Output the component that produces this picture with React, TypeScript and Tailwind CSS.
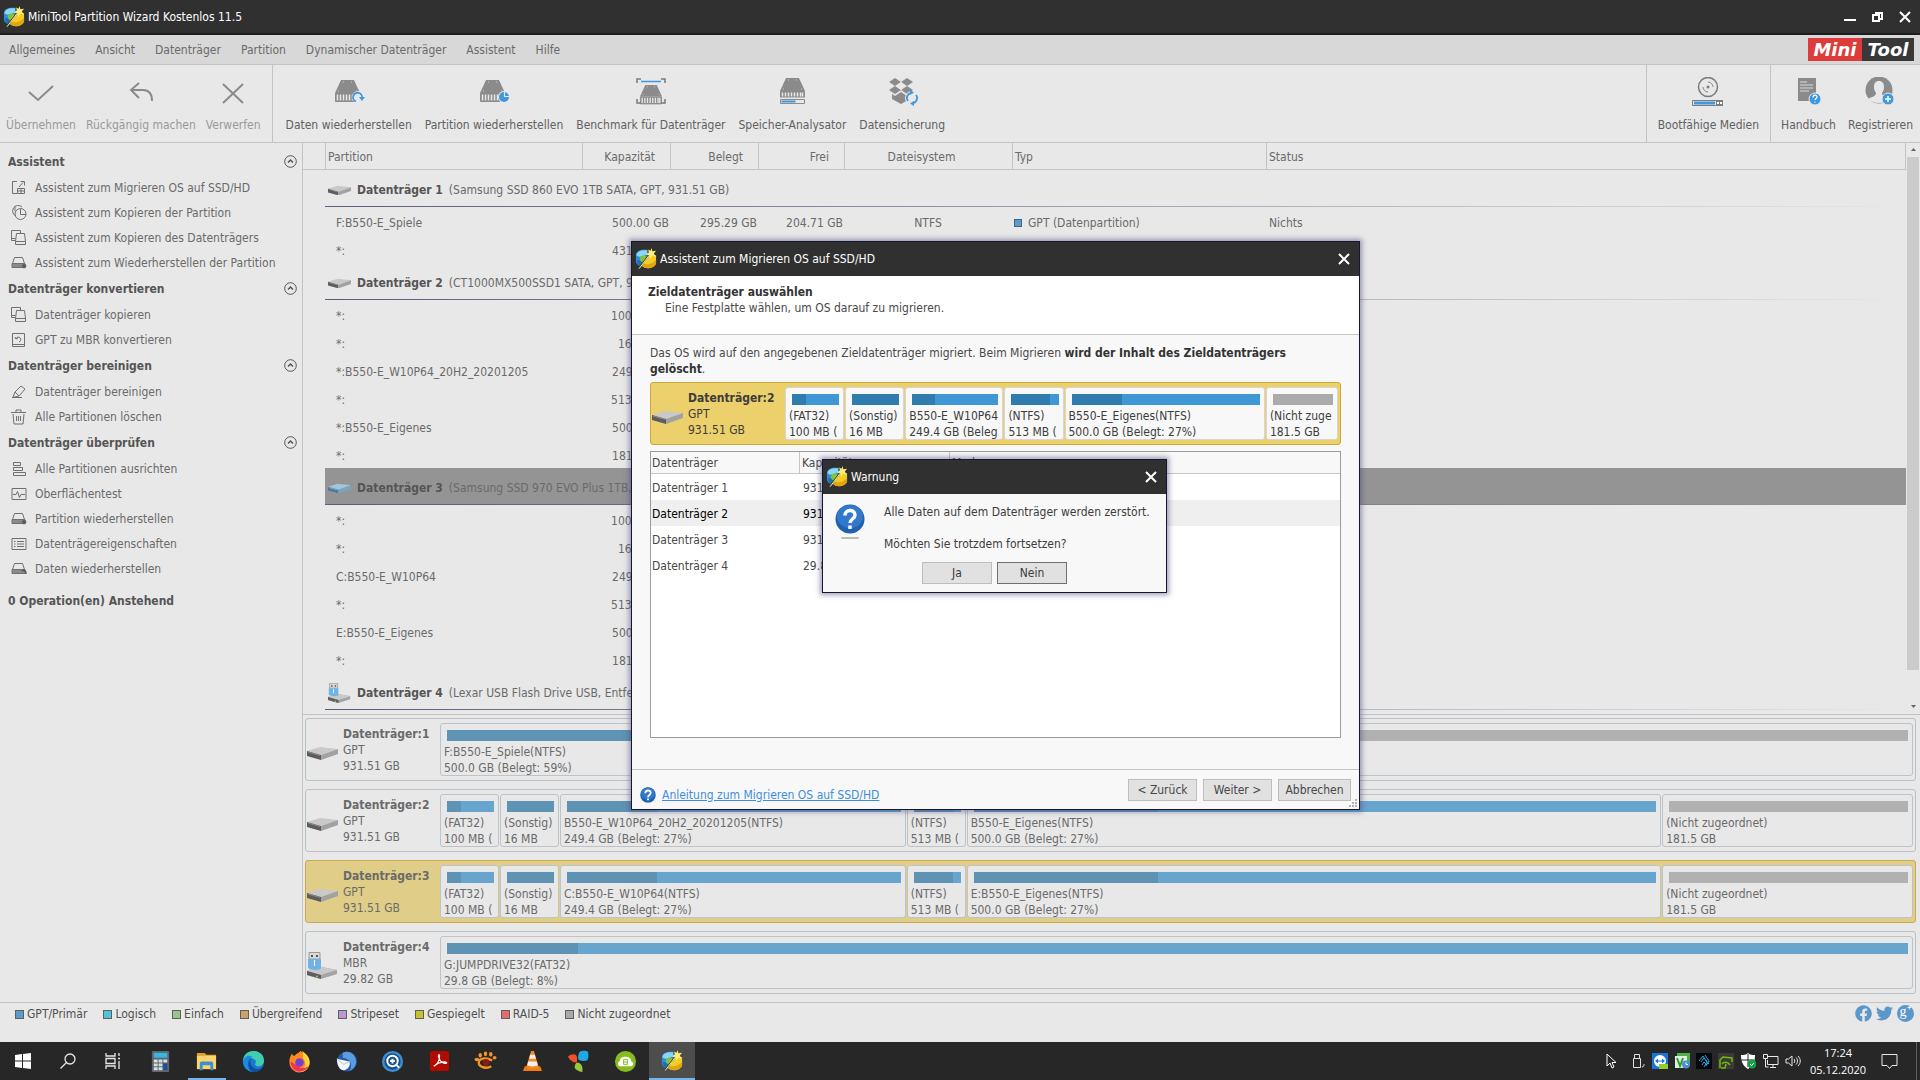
import React from "react";
import { clsx } from "clsx";
import { FaFacebook, FaTwitter } from "react-icons/fa";

type Part = { name: string; size: string; used: number; grow: number; free?: boolean };
type Disk = { title: string; style: string; size: string; usb?: boolean; selected?: boolean; parts: Part[] };
type Row = { name: string; cap: string; used?: string; free?: string; fs?: string; type?: string; status?: string };
type Group = { title: string; info: string; icon: "disk" | "blue" | "usb"; selected?: boolean; rows: Row[] };

const menu = ["Allgemeines", "Ansicht", "Datenträger", "Partition", "Dynamischer Datenträger", "Assistent", "Hilfe"];

const sidebar = [
  {
    title: "Assistent",
    items: [
      ["migrate", "Assistent zum Migrieren OS auf SSD/HD"],
      ["copyPart", "Assistent zum Kopieren der Partition"],
      ["copyDisk", "Assistent zum Kopieren des Datenträgers"],
      ["recover", "Assistent zum Wiederherstellen der Partition"],
    ],
  },
  {
    title: "Datenträger konvertieren",
    items: [
      ["copyDisk", "Datenträger kopieren"],
      ["convert", "GPT zu MBR konvertieren"],
    ],
  },
  {
    title: "Datenträger bereinigen",
    items: [
      ["wipe", "Datenträger bereinigen"],
      ["trash", "Alle Partitionen löschen"],
    ],
  },
  {
    title: "Datenträger überprüfen",
    items: [
      ["align", "Alle Partitionen ausrichten"],
      ["surface", "Oberflächentest"],
      ["recover", "Partition wiederherstellen"],
      ["props", "Datenträgereigenschaften"],
      ["recoverData", "Daten wiederherstellen"],
    ],
  },
];

const groups: Group[] = [
  {
    title: "Datenträger 1",
    info: "(Samsung SSD 860 EVO 1TB SATA, GPT, 931.51 GB)",
    icon: "disk",
    rows: [
      {
        name: "F:B550-E_Spiele",
        cap: "500.00 GB",
        used: "295.29 GB",
        free: "204.71 GB",
        fs: "NTFS",
        type: "GPT (Datenpartition)",
        status: "Nichts",
      },
      { name: "*:", cap: "431.51 GB" },
    ],
  },
  {
    title: "Datenträger 2",
    info: "(CT1000MX500SSD1 SATA, GPT, 931.51 GB)",
    icon: "disk",
    rows: [
      { name: "*:", cap: "100.00 MB" },
      { name: "*:", cap: "16.00 MB" },
      { name: "*:B550-E_W10P64_20H2_20201205", cap: "249.42 GB" },
      { name: "*:", cap: "513.00 MB" },
      { name: "*:B550-E_Eigenes", cap: "500.00 GB" },
      { name: "*:", cap: "181.47 GB" },
    ],
  },
  {
    title: "Datenträger 3",
    info: "(Samsung SSD 970 EVO Plus 1TB, GPT, 931.51 GB)",
    icon: "blue",
    selected: true,
    rows: [
      { name: "*:", cap: "100.00 MB" },
      { name: "*:", cap: "16.00 MB" },
      { name: "C:B550-E_W10P64", cap: "249.42 GB" },
      { name: "*:", cap: "513.00 MB" },
      { name: "E:B550-E_Eigenes", cap: "500.00 GB" },
      { name: "*:", cap: "181.47 GB" },
    ],
  },
  { title: "Datenträger 4", info: "(Lexar USB Flash Drive USB, Entfernbar, MBR, 29.82 GB)", icon: "usb", rows: [] },
];

const disks: Disk[] = [
  {
    title: "Datenträger:1",
    style: "GPT",
    size: "931.51 GB",
    parts: [
      { name: "F:B550-E_Spiele(NTFS)", size: "500.0 GB (Belegt: 59%)", used: 59, grow: 790 },
      { name: "(Nicht zugeordnet)", size: "431.5 GB", used: 0, grow: 683, free: true },
    ],
  },
  {
    title: "Datenträger:2",
    style: "GPT",
    size: "931.51 GB",
    parts: [
      { name: "(FAT32)", size: "100 MB (", used: 30, grow: 57 },
      { name: "(Sonstig)", size: "16 MB", used: 100, grow: 57 },
      { name: "B550-E_W10P64_20H2_20201205(NTFS)", size: "249.4 GB (Belegt: 27%)", used: 27, grow: 344 },
      { name: "(NTFS)", size: "513 MB (", used: 83, grow: 57 },
      { name: "B550-E_Eigenes(NTFS)", size: "500.0 GB (Belegt: 27%)", used: 27, grow: 693 },
      { name: "(Nicht zugeordnet)", size: "181.5 GB", used: 0, grow: 249, free: true },
    ],
  },
  {
    title: "Datenträger:3",
    style: "GPT",
    size: "931.51 GB",
    selected: true,
    parts: [
      { name: "(FAT32)", size: "100 MB (", used: 30, grow: 57 },
      { name: "(Sonstig)", size: "16 MB", used: 100, grow: 57 },
      { name: "C:B550-E_W10P64(NTFS)", size: "249.4 GB (Belegt: 27%)", used: 27, grow: 344 },
      { name: "(NTFS)", size: "513 MB (", used: 83, grow: 57 },
      { name: "E:B550-E_Eigenes(NTFS)", size: "500.0 GB (Belegt: 27%)", used: 27, grow: 693 },
      { name: "(Nicht zugeordnet)", size: "181.5 GB", used: 0, grow: 249, free: true },
    ],
  },
  {
    title: "Datenträger:4",
    style: "MBR",
    size: "29.82 GB",
    usb: true,
    parts: [{ name: "G:JUMPDRIVE32(FAT32)", size: "29.8 GB (Belegt: 8%)", used: 9, grow: 1 }],
  },
];

const targetDisk: Disk = {
  title: "Datenträger:2",
  style: "GPT",
  size: "931.51 GB",
  selected: true,
  parts: [
    { name: "(FAT32)", size: "100 MB (", used: 30, grow: 57 },
    { name: "(Sonstig)", size: "16 MB", used: 100, grow: 57 },
    { name: "B550-E_W10P64", size: "249.4 GB (Beleg", used: 27, grow: 96 },
    { name: "(NTFS)", size: "513 MB (", used: 83, grow: 57 },
    { name: "B550-E_Eigenes(NTFS)", size: "500.0 GB (Belegt: 27%)", used: 27, grow: 198 },
    { name: "(Nicht zuge", size: "181.5 GB", used: 0, grow: 70, free: true },
  ],
};

const legend = [
  ["GPT/Primär", "bg-[#5a9bcb]"],
  ["Logisch", "bg-[#4fc3d9]"],
  ["Einfach", "bg-[#97c58b]"],
  ["Übergreifend", "bg-[#c9a468]"],
  ["Stripeset", "bg-[#bd98d0]"],
  ["Gespiegelt", "bg-[#c6c22e]"],
  ["RAID-5", "bg-[#e36c6c]"],
  ["Nicht zugeordnet", "bg-[#a9a9a9]"],
];

function AppLogo({ size = 24 }: { size?: number }) {
  return (
    <svg width={size} height={size} viewBox="0 0 24 24" className="shrink-0">
      <path d="M1 8c0-4 4-6 9-6h4v14l-5 4c-5 0-8-2-8-6z" fill="#2f8fd6" />
      <path d="M1.500 8C2 4 6 2.500 10 2.500h3v4c-4 3-9 4-11.500 1.500z" fill="#8ad6f7" />
      <path d="M2 13c2 1 4 0 5-2l4 1-4 8c-3-.5-5-3-5-7z" fill="#1d6fb5" />
      <path d="M6 9l5-1 2 3-5 5-3-3z" fill="#7dc243" />
      <path d="M9 13c3-5 9-7 14-5v8c-1 6-11 8-15 4z" fill="#f5cb27" />
      <path d="M9 17c5 2 10 0 14-4v4c-1 5-11 7-15 3z" fill="#e3a50c" />
      <path d="M3.500 23L15.500 7" stroke="#3c4a22" strokeWidth="1.800" />
      <path d="M4.500 22.500L15.500 8" stroke="#f3f7d2" strokeWidth="1" />
      <path d="M18 0l1 3.500 4-.5-2.500 3 2.500 3.500-4-1L16.500 12l-1-4-4-1 3.500-2-.5-3.500 2.500 1.500z" fill="#fdec7a" />
    </svg>
  );
}

function DiskIcon({ kind = "disk" }: { kind?: "disk" | "blue" | "usb" }) {
  if (kind === "usb") {
    return (
      <svg viewBox="0 0 31 27" className="w-full">
        <path d="M0 19l10-5 20 4v4l-16 5-14-4z" fill="#a4a4a4" />
        <path d="M0 19l10-5 20 4-16 5z" fill="#c9c9c9" />
        <path d="M0 19l14 4v4L0 23z" fill="#5f5f5f" />
        <path d="M2 .5h11V7H2z" fill="#d9d9d9" stroke="#9a9a9a" strokeWidth="1" />
        <path d="M4 3h2v2H4zM9 3h2v2H9z" fill="#555" />
        <path d="M1 7h13v9c0 3-11 2-13 0z" fill="#6fb2e6" />
        <path d="M7.500 8v6" stroke="#fff" strokeWidth="1" />
        <circle cx="10" cy="24.500" r="1" fill="#7fd36a" />
      </svg>
    );
  }
  const blue = kind === "blue";
  return (
    <svg viewBox="0 0 31 14" className="w-full">
      <path d="M0 5L13 1l18 2-17 6z" fill={blue ? "#a3c4da" : "#c9c9c9"} />
      <path d="M0 5l14 4v5L0 10z" fill={blue ? "#4d7c9c" : "#5c5c5c"} />
      <path d="M14 9l17-6v5l-17 6z" fill={blue ? "#7aa5c2" : "#a2a2a2"} />
      <path d="M1 6l12 3.500" stroke={blue ? "#86b6d6" : "#8a8a8a"} />
    </svg>
  );
}

function Drive({ x = 0, y = 0, w = 25 }: { x?: number; y?: number; w?: number }) {
  const s = w / 25;
  return (
    <g transform={`translate(${x} ${y}) scale(${s})`}>
      <path d="M6 0h13l6 13H0z" fill="#8b8b8b" />
      <path d="M.5 13.500h24v8H.5z" stroke="#8b8b8b" fill="#8b8b8b" />
      <path
        d="M2.500 14.500v6M5.500 14.500v6M8.500 14.500v6M11.500 14.500v6M14.500 14.500v6M17.500 14.500v6M20.500 14.500v6M22.500 14.500v6"
        stroke="#e8e8e8"
        strokeWidth="1.500"
      />
      <path d="M8 2h1M16 2h1M3 11h1M21 11h1" stroke="#d0d0d0" />
    </g>
  );
}

function ToolIcon({ name }: { name: string }) {
  return (
    <svg width="32" height="32" viewBox="0 0 32 32" fill="none">
      {name === "apply" && <path d="M4 15l9 8L28 9" stroke="#8b8b8b" strokeWidth="2" />}
      {name === "undo" && <path d="M14 6L6 13l8 8M6 13h12c6 0 9 4 9 11" stroke="#8b8b8b" strokeWidth="2" />}
      {name === "discard" && <path d="M6 7l20 19M26 7L6 26" stroke="#8b8b8b" strokeWidth="2" />}
      {name === "data" && (
        <>
          <Drive x={2} y={3} w={25} />
          <circle cx="25" cy="20" r="6" fill="#e8e8e8" />
          <path d="M23 24.500A4.500 4.500 0 1 1 29 21" stroke="#3f97e0" strokeWidth="1.800" />
          <path d="M26 20h6l-3 4z" fill="#3f97e0" />
        </>
      )}
      {name === "partition" && (
        <>
          <Drive x={2} y={3} w={25} />
          <circle cx="26" cy="20" r="6" fill="#e8e8e8" />
          <circle cx="26" cy="20" r="5" fill="#3f97e0" />
          <path d="M26.500 14v5.500H32" stroke="#e8e8e8" strokeWidth="1.200" />
        </>
      )}
      {name === "benchmark" && (
        <>
          <Drive x={5} y={8} w={22} />
          <path d="M2 6V2h4M26 2h4v4M2 22v4h4M26 26h4v-4" stroke="#7a7a7a" strokeWidth="1.500" />
          <path d="M6 4.500h20" stroke="#3f97e0" strokeWidth="1.500" />
        </>
      )}
      {name === "analyse" && (
        <>
          <Drive x={4} y={1} w={25} />
          <rect x="3" y="20" width="27" height="9" fill="#e8e8e8" />
          <path d="M4.500 22.500h24v4h-24z" stroke="#8b8b8b" />
          <path d="M4 20h25" stroke="#8b8b8b" />
          <path d="M5.500 23.500h14v2h-14z" fill="#3f97e0" />
        </>
      )}
      {name === "backup" && (
        <>
          <path
            d="M9 1l6 4-6 4-6-4zM21 1l6 4-6 4-6-4zM9 9l6 4-6 4-6-4zM21 9l6 4-6 4-6-4zM6 17l3 2 6-4 6 4 3-2v5l-9 5-9-5z"
            fill="#8b8b8b"
          />
          <path d="M15 5l5 4-5 4-5-4z" fill="#e8e8e8" />
          <circle cx="26" cy="21" r="7" fill="#e8e8e8" />
          <path d="M22 24a5 5 0 0 1 3-8M30 18a5 5 0 0 1-3 8" stroke="#3f97e0" strokeWidth="1.800" />
          <path d="M24 13l4 2.500-4 2.500zM28 29l-4-2.500 4-2.500z" fill="#3f97e0" />
        </>
      )}
      {name === "boot" && (
        <>
          <circle cx="16" cy="10" r="9.500" stroke="#7c7c7c" strokeWidth="1.500" />
          <circle cx="16" cy="10" r="1.500" fill="#7c7c7c" />
          <path d="M11 10a5 5 0 0 0 5 5M16 5a5 5 0 0 1 5 5" stroke="#8b8b8b" />
          <path d="M.5 23.500h30v5H.5z" stroke="#7c7c7c" />
          <path d="M2 24.500h21v3H2z" fill="#3f97e0" />
          <path d="M24 23h7v6h-7z" fill="#7c7c7c" />
          <path d="M25 26h2M28 26h2" stroke="#fff" strokeWidth="2" />
        </>
      )}
      {name === "manual" && (
        <>
          <path d="M6 1h18v23H6z" fill="#8b8b8b" />
          <path d="M8 5h7M8 8h13M8 11h13M8 14h9" stroke="#dcdcdc" />
          <circle cx="23" cy="22" r="6" fill="#3f97e0" stroke="#e8e8e8" />
          <path d="M21 20.500c0-3 4-3 4-.5 0 1.500-2 1.500-2 3M23 24.500v1" stroke="#fff" strokeWidth="1.200" />
        </>
      )}
      {name === "register" && (
        <>
          <circle cx="15" cy="13" r="13.500" fill="#8b8b8b" />
          <path
            d="M15 4c3.500 0 5 2.500 5 6 0 3-1 4-2 6 0 2 1 3 5 4 2 .5 2.500 1 3 2-3 3-7 4-11 4s-8-1.500-10.500-4C6 20 12 20 12 16c-1-2-2-3-2-6 0-3.500 1.500-6 5-6z"
            fill="#e8e8e8"
          />
          <circle cx="24" cy="22" r="6" fill="#3f97e0" stroke="#e8e8e8" />
          <path d="M24 19v6M21 22h6" stroke="#fff" strokeWidth="1.500" />
        </>
      )}
    </svg>
  );
}

function SideIcon({ name }: { name: string }) {
  return (
    <svg width="16" height="16" viewBox="0 0 16 16" fill="none" stroke="#707070" className="shrink-0">
      {name === "migrate" && <path d="M6 1.500H1.500v12H6M6.500 8.500h7v5h-7zM10 8.500v5M6.500 11h7M8 7l4-4.500M9.500 1.500h4v4" />}
      {name === "copyPart" && (
        <>
          <path d="M5 11A5.500 5.500 0 1 1 11 2M4 1v5" />
          <circle cx="9.500" cy="9" r="5.500" />
          <path d="M9.500 4v5.500H15" />
        </>
      )}
      {name === "copyDisk" && <path d="M4.500 10.500h-4v-3M9.500 3V.5H.5v8h4M5.500 3.500h8l1 8v3h-10v-3zM4.500 11.500h10" />}
      {name.startsWith("recover") && (
        <>
          <path d="M3.500 2.500h8l2 6h-12z" />
          <path d="M1 8.500h13v4H1z" fill="#8a8a8a" />
          {name === "recover" ? (
            <circle cx="13" cy="11" r="2" fill="#555" />
          ) : (
            <path d="M11 10c2-2 4 0 4 3" stroke="#555" strokeWidth="1.500" />
          )}
        </>
      )}
      {name === "convert" && <path d="M1.500 1.500h12v13h-12zM1.500 12.500h12M5 6.500a2.500 2.500 0 1 1 3 3.500M4 5l1 2 2-1" />}
      {name === "wipe" && <path d="M1 13.500h10M2 13l2-5 6-6 4 3-6 7-4 1zM4 8l4 4" />}
      {name === "trash" && <path d="M0 3.500h15M5 3V1h5v2M2 5l1 10h9l1-10M5.500 7v5M7.500 7v5M9.500 7v5" />}
      {name === "align" && <path d="M2.500 1.500h7v3h-7zM2.500 6.500h9v3h-9zM2.500 11.500h12v3h-12z" />}
      {name === "surface" && <path d="M1 2.500h14v11H1zM2 8.500h3l1.500-3 2 6 1.500-3h4" />}
      {name === "props" && <path d="M1 2.500h14v11H1zM3 5.500h1.500M6 5.500h7M3 8h1.500M6 8h7M3 10.500h1.500M6 10.500h7" />}
    </svg>
  );
}

function CloseIcon() {
  return (
    <svg width="12" height="12" viewBox="0 0 12 12" stroke="#fff" strokeWidth="2">
      <path d="M1 1l10 10M11 1L1 11" />
    </svg>
  );
}

function QuestionBall({ size }: { size: number }) {
  return (
    <svg width={size} height={size} viewBox="0 0 30 30" className="shrink-0">
      <circle cx="15" cy="15" r="14.500" fill="#2060ad" />
      <ellipse cx="15" cy="12.500" rx="13" ry="11.500" fill="#3278cb" />
      <path d="M10 11.500C10 5 20 5 20 11c0 4-5 4-5 8M15 21.500v3.500" fill="none" stroke="#fff" strokeWidth="3.500" />
    </svg>
  );
}

function Tool({ icon, label, disabled }: { icon: string; label: string; disabled?: boolean }) {
  return (
    <button
      type="button"
      className={clsx("flex flex-col items-center gap-2 pt-3 leading-4", disabled ? "text-[#9a9a9a]" : "text-[#616161]")}
    >
      <ToolIcon name={icon} />
      {label}
    </button>
  );
}

function DiskCard({ disk, live }: { disk: Disk; live?: boolean }) {
  const box = live ? "border-[#d6d6d6] bg-[#f8f8f8]" : "border-[#bcc3c9] bg-[#e8e8e8]";
  return (
    <div
      className={clsx(
        "flex h-[63px] rounded-[3px] border py-1 pr-0.5",
        disk.selected && live && "border-[#cfa63a] bg-[#ebd06c] text-[#3c3c3c]",
        disk.selected && !live && "border-[#c9ab52] bg-[#e0cd87]",
        !disk.selected && "border-[#b9c1c9]"
      )}
    >
      <div className="flex w-[134px] shrink-0 items-center">
        <div className="w-8 shrink-0 pt-1.5 pl-px">
          <DiskIcon kind={disk.usb ? "usb" : "disk"} />
        </div>
        <div className="pt-px pl-[5px] leading-4 whitespace-nowrap">
          <div className="font-bold">{disk.title}</div>
          <div>{disk.style}</div>
          <div>{disk.size}</div>
        </div>
      </div>
      <div className="flex min-w-0 flex-1 gap-px">
        {disk.parts.map((p, i) => (
          <div
            key={i}
            className={clsx("min-w-0 basis-0 overflow-hidden rounded-[3px] border pt-1.5", box)}
            style={{ flexGrow: p.grow }}
          >
            <div
              className={clsx(
                "mr-1 mb-[3px] ml-1.5 h-[11px]",
                p.free ? (live ? "bg-[#ababab]" : "bg-[#b1b1b1]") : live ? "bg-[#3f98d5]" : "bg-[#67a5cf]"
              )}
            >
              <div className={clsx("h-full", live ? "bg-[#2f7cae]" : "bg-[#5f93b3]")} style={{ width: `${p.used}%` }} />
            </div>
            <div className="pl-[3px] leading-4 whitespace-nowrap">
              <div>{p.name}</div>
              <div>{p.size}</div>
            </div>
          </div>
        ))}
      </div>
    </div>
  );
}

function Sidebar() {
  return (
    <aside className="w-[303px] shrink-0 border-r border-[#c3c3c6] pt-[5px] pr-[5px] pl-2">
      {sidebar.map((s) => (
        <section key={s.title}>
          <div className="flex h-[27px] items-center justify-between">
            <h2 className="font-bold text-[#555]">{s.title}</h2>
            <button type="button" aria-label={s.title}>
              <svg width="13" height="13" viewBox="0 0 13 13" fill="none" stroke="#555">
                <circle cx="6.500" cy="6.500" r="5.800" />
                <path d="M4 7.500L6.500 5 9 7.500" strokeWidth="1.500" />
              </svg>
            </button>
          </div>
          {s.items.map(([icon, label]) => (
            <a key={label} href="#" className="flex h-[25px] items-center gap-2 pl-[3px] whitespace-nowrap">
              <SideIcon name={icon} />
              {label}
            </a>
          ))}
        </section>
      ))}
      <p className="pt-3 font-bold text-[#555]">0 Operation(en) Anstehend</p>
    </aside>
  );
}

function PartitionTable() {
  const th = "border-b border-l border-[#c3c3c6] pt-0.5 font-normal";
  return (
    <table className="w-full table-fixed border-separate border-spacing-0">
      <colgroup>
        <col className="w-[22px]" />
        <col className="w-[257px]" />
        <col className="w-[88px]" />
        <col className="w-[88px]" />
        <col className="w-[86px]" />
        <col className="w-[168px]" />
        <col className="w-[254px]" />
        <col />
      </colgroup>
      <thead>
        <tr className="h-[27px]">
          <td className="border-b border-[#c3c3c6]" />
          <th className={clsx(th, "pl-0.5 text-left")}>Partition</th>
          <th className={clsx(th, "pr-[15px] text-right")}>Kapazität</th>
          <th className={clsx(th, "pr-[15px] text-right")}>Belegt</th>
          <th className={clsx(th, "pr-[15px] text-right")}>Frei</th>
          <th className={clsx(th, "pr-[14px] text-center")}>Dateisystem</th>
          <th className={clsx(th, "pl-0.5 text-left")}>Typ</th>
          <th className={clsx(th, "border-r pl-0.5 text-left")}>Status</th>
        </tr>
      </thead>
      <tbody>
        {groups.map((g) => (
          <React.Fragment key={g.title}>
            <tr>
              <td />
              <td colSpan={7} className={clsx("p-0", g.selected && "bg-[#949494]")}>
                <div className="flex h-9 items-center gap-1.5 pt-1 pl-[3px] whitespace-nowrap">
                  <span className="w-[23px]">
                    <DiskIcon kind={g.icon} />
                  </span>
                  <b className="text-[#555]">{g.title}</b>
                  <span>{g.info}</span>
                </div>
                <div className="h-px bg-linear-to-r from-[#5c5c78] to-transparent" />
              </td>
            </tr>
            {g.rows.map((r, i) => (
              <tr key={i} className="h-7">
                <td />
                <td className="pt-1 pl-[11px]">{r.name}</td>
                <td className="pt-1 pr-px text-right">{r.cap}</td>
                <td className="pt-1 pr-px text-right">{r.used}</td>
                <td className="pt-1 pr-px text-right">{r.free}</td>
                <td className="pt-1 text-center">{r.fs}</td>
                <td className="pt-1 pl-0.5">
                  {r.type && (
                    <span className="flex items-center gap-1.5">
                      <i className="h-2 w-2 border border-[#3f6580] bg-[#5a9bcb]" />
                      {r.type}
                    </span>
                  )}
                </td>
                <td className="pt-1 pl-[3px]">{r.status}</td>
              </tr>
            ))}
          </React.Fragment>
        ))}
      </tbody>
    </table>
  );
}

function TitleBar({ title }: { title: string }) {
  return (
    <header className="flex h-[34px] items-center gap-[3px] bg-[#303030] pr-[9px] pl-[3px] text-white">
      <AppLogo size={22} />
      <span className="flex-1">{title}</span>
      <button type="button" aria-label="Schließen">
        <CloseIcon />
      </button>
    </header>
  );
}

function WarningDialog() {
  const btn = "h-[22px] w-[70px] border bg-[#e1e1e1]";
  return (
    <div className="absolute top-[459px] left-[822px] w-[345px] border border-[#15182c] bg-[#f8f8f8] text-[#3c3c3c] shadow-[0_0_5px_2px_rgba(70,70,125,0.5)]">
      <TitleBar title="Warnung" />
      <div className="flex items-start pt-[10px] pr-2 pl-3">
        <div className="flex w-[29px] flex-col items-center gap-[3px]">
          <QuestionBall size={30} />
          <span className="h-0.5 w-[18px] rounded-full bg-[#bcbcbc]" />
        </div>
        <div className="pl-5 leading-4 whitespace-nowrap">
          <p>Alle Daten auf dem Datenträger werden zerstört.</p>
          <p className="pt-4">Möchten Sie trotzdem fortsetzen?</p>
        </div>
      </div>
      <div className="flex justify-center gap-[5px] pt-[10px] pb-2">
        <button type="button" className={clsx(btn, "border-[#bdbdbd]")}>
          Ja
        </button>
        <button type="button" className={clsx(btn, "border-[#6f6f6f]")}>
          Nein
        </button>
      </div>
    </div>
  );
}

function MigrateDialog() {
  const btn = "h-[22px] border border-[#bdbdbd] bg-[#e1e1e1]";
  const rows = ["931.51 GB", "931.51 GB", "931.51 GB", "29.82 GB"];
  return (
    <div className="absolute top-[241px] left-[631px] w-[729px] border border-[#15182c] bg-[#f8f8f8] text-[#484848] shadow-[0_0_5px_2px_rgba(70,70,125,0.5)]">
      <TitleBar title="Assistent zum Migrieren OS auf SSD/HD" />
      <div className="h-[59px] border-b border-[#c4c4c4] bg-white pt-2 pl-4 leading-4">
        <h2 className="font-bold text-[#333]">Zieldatenträger auswählen</h2>
        <p className="pl-[17px]">Eine Festplatte wählen, um OS darauf zu migrieren.</p>
      </div>
      <div className="px-[18px] pt-[10px]">
        <p className="pb-[5px] leading-4">
          Das OS wird auf den angegebenen Zieldatenträger migriert. Beim Migrieren{" "}
          <b className="text-[#333]">
            wird der Inhalt des Zieldatenträgers
            <br />
            gelöscht
          </b>
          .
        </p>
        <DiskCard disk={targetDisk} live />
        <div className="mt-[6px] h-[287px] border border-[#9b9b9b] bg-white">
          <table className="w-full table-fixed border-separate border-spacing-0">
            <colgroup>
              <col className="w-[149px]" />
              <col className="w-[150px]" />
              <col />
            </colgroup>
            <thead>
              <tr className="h-[22px] bg-[#f8f8f8]">
                <th className="border-r border-b border-[#c6c6c6] pl-px text-left font-normal">Datenträger</th>
                <th className="border-r border-b border-[#c6c6c6] pl-0.5 text-left font-normal">Kapazität</th>
                <th className="border-b border-[#c6c6c6] pl-0.5 text-left font-normal">Modus</th>
              </tr>
            </thead>
            <tbody>
              {rows.map((cap, i) => (
                <tr key={i} className={clsx("h-[26px]", i === 1 && "bg-[#efefef] text-black")}>
                  <td className="pt-0.5 pl-px">Datenträger {i + 1}</td>
                  <td className="pt-0.5 pl-[3px]">{cap}</td>
                  <td />
                </tr>
              ))}
            </tbody>
          </table>
        </div>
      </div>
      <footer className="relative mt-[31px] flex h-[40px] items-center gap-[6px] border-t border-[#c4c4c4] pr-2 pl-2">
        <span className="flex flex-1 items-center gap-[6px] pt-[10px]">
          <QuestionBall size={16} />
          <a href="#" className="text-[#3d8ee0] underline">
            Anleitung zum Migrieren OS auf SSD/HD
          </a>
        </span>
        <button type="button" className={clsx(btn, "w-[69px]")}>
          &lt; Zurück
        </button>
        <button type="button" className={clsx(btn, "w-[69px]")}>
          Weiter &gt;
        </button>
        <button type="button" className={clsx(btn, "w-[73px]")}>
          Abbrechen
        </button>
        <svg width="9" height="9" viewBox="0 0 9 9" fill="#b3b3b3" className="absolute right-px bottom-px">
          <path d="M6 0h2v2H6zM3 3h2v2H3zM6 3h2v2H6zM0 6h2v2H0zM3 6h2v2H3zM6 6h2v2H6z" />
        </svg>
      </footer>
    </div>
  );
}

function Taskbar() {
  const apps = [
    {
      name: "Rechner",
      art: (
        <>
          <rect x="3" y="1" width="18" height="22" rx="1" fill="#5d6670" />
          <path d="M5 3h14v5H5z" fill="#35b8e0" />
          <path d="M5 10h4v3H5zM10 10h4v3h-4zM15 10h4v3h-4zM5 14h4v3H5zM10 14h4v3h-4zM5 18h4v3H5zM10 18h4v3h-4z" fill="#d6dde3" />
          <path d="M15 14h4v7h-4z" fill="#1c4f93" />
        </>
      ),
    },
    {
      name: "Explorer",
      open: true,
      art: (
        <>
          <path d="M2 3h8l2 2h10v4H2z" fill="#e0a02c" />
          <path d="M2 6h20v14H2z" fill="#fbd46d" />
          <path d="M5 21v-7c0-1 1-2 2-2h10c1 0 2 1 2 2v7h-3v-5H8v5z" fill="#3d8fd1" />
        </>
      ),
    },
    {
      name: "Edge",
      art: (
        <>
          <circle cx="12" cy="12" r="11" fill="#1b78d0" />
          <path d="M1 12C1 5 6 1 12 1c7 0 11 5 11 10 0 4-3 6-6 6-3 0-4-2-2.500-4C15 8 5 6 1 12z" fill="#43cdb0" />
          <path d="M1 12C2 6 8 5 11 7c-4 1-6 5-4 10 2 3 5 5 9 5-8 3-15-3-15-10z" fill="#1b8be0" />
          <path d="M11 8c-4 2-3 11 5 12 2 0 4-1 5.500-2-2 4-6 5.500-10 5-6-2-7-12-.5-15z" fill="#0f4f9e" />
        </>
      ),
    },
    {
      name: "Firefox",
      art: (
        <>
          <path d="M13 1c4 3 10 6 9.500 13A10.500 10 0 0 1 1.500 13C1 9 3 6 4 4c1 2 2 2 3 2 1-2 3-2 6-5z" fill="#ff8a1f" />
          <path d="M15 1c5 4 8 7 7.500 13-.5 5-5 9-10.500 9 6-3 8-10 4-14z" fill="#ffd13a" />
          <path d="M3 12c-1 5 4 10.500 9 10.500 4 0 8-2 10-6-4 3-8 3-11 1z" fill="#f0325c" />
          <circle cx="12" cy="13" r="4.500" fill="#7b3fd0" />
        </>
      ),
    },
    {
      name: "Thunderbird",
      art: (
        <>
          <circle cx="12.500" cy="12" r="10.500" fill="#2459a8" />
          <path d="M8 3c7-4 14 2 14 9 0 5-4 9-7 10 4-7 1-13-7-14z" fill="#5b9be0" />
          <path d="M2 9l13 3c2 4-2 9-6 9s-7-5-7-12z" fill="#f3f5f9" />
          <path d="M2 9l7 6 6-3" stroke="#b8c1cf" fill="none" />
        </>
      ),
    },
    {
      name: "Suche",
      art: (
        <>
          <circle cx="12" cy="12" r="11" fill="#3f8fd0" />
          <circle cx="12" cy="12" r="8.500" fill="#174f8c" />
          <circle cx="12" cy="11.500" r="5.500" fill="none" stroke="#fff" strokeWidth="2" />
          <path d="M12 9v5M9.500 11.500h5M16 15.500l3 3" stroke="#fff" strokeWidth="2" />
        </>
      ),
    },
    {
      name: "Acrobat",
      art: (
        <>
          <rect x="2" y="1" width="20" height="21" rx="3" fill="#b30b00" />
          <path d="M6 17c4-2 6-7 6-11 0-2-1.500-1-1 1 1 4 4 7 7 7s1-2-2-1.500c-4 .5-7 2-10 4.500z" fill="none" stroke="#fff" strokeWidth="1.300" />
        </>
      ),
    },
    {
      name: "Pfote",
      art: (
        <>
          <g fill="#f0952a">
            <ellipse cx="3" cy="10" rx="2.500" ry="1.800" />
            <ellipse cx="6.500" cy="5.500" rx="1.800" ry="2.500" />
            <ellipse cx="12" cy="4" rx="1.800" ry="2.500" />
            <ellipse cx="17.500" cy="4.500" rx="1.800" ry="2.500" />
            <ellipse cx="21.500" cy="8" rx="2" ry="1.800" />
          </g>
          <path d="M19 11C12 7 5 9 5 13c0 5 8 7 13 4" fill="none" stroke="#f0952a" strokeWidth="2.500" />
          <circle cx="12.500" cy="13" r="3.500" fill="#8c1c13" />
        </>
      ),
    },
    {
      name: "VLC",
      art: (
        <>
          <path d="M4 17h16l2 5H2z" fill="#f07c12" />
          <path d="M10.500 1h3l5 17c-3 2-10 2-13 0z" fill="#f58a1f" />
          <path d="M9.500 5h5l1 4h-7zM7.500 12h9l1 4c-3 1.500-8 1.500-11 0z" fill="#eef0f2" />
        </>
      ),
    },
    {
      name: "Blätter",
      art: (
        <>
          <path d="M13 2c4-2 8-1 9 0 1 4 0 7-1 9-4 1-8 0-9-1-1-2 0-6 1-8z" fill="#1fa8e8" />
          <path d="M1 7c3-3 6-3 8-2 2 2 2 5 1 8-4 0-7-2-9-6z" fill="#f0512d" />
          <path d="M10 13c4 0 7 3 6 10-5-1-8-3-8-5s1-4 2-5z" fill="#96c93d" />
        </>
      ),
    },
    {
      name: "Cloud",
      art: (
        <>
          <circle cx="12" cy="12" r="11" fill="#86bc1d" />
          <path d="M6 17c-3-1-2-5 0-5 0-4 3-5 6-5s6 1 6 5c3 1 3 4 0 5z" fill="#fff" />
          <path d="M10 10h4v5h-4zM10 12.500h4" fill="none" stroke="#86bc1d" />
        </>
      ),
    },
  ];
  return (
    <footer className="flex h-[38px] items-center bg-[#272727] font-['Open_Sans','Noto_Sans',sans-serif] text-white">
      <button type="button" aria-label="Start" className="flex w-[45px] justify-center">
        <svg width="16" height="16" viewBox="0 0 16 16" fill="#fff">
          <path d="M0 2l7-1v6.500H0zM8 1l8-1v7.500H8zM0 8.500h7V15l-7-1zM8 8.500h8V16l-8-1z" />
        </svg>
      </button>
      <button type="button" aria-label="Suchen" className="flex w-[45px] justify-center">
        <svg width="16" height="16" viewBox="0 0 16 16" fill="none" stroke="#e8e8e8" strokeWidth="1.300">
          <circle cx="10" cy="6" r="5" />
          <path d="M6.500 9.500L.5 15.500" />
        </svg>
      </button>
      <button type="button" aria-label="Taskansicht" className="flex w-[45px] justify-center">
        <svg width="16" height="16" viewBox="0 0 16 16" fill="none" stroke="#e8e8e8" strokeWidth="1.300">
          <path d="M1 0v3h9V0M1 16v-3h9v3M1 5.500h9v5H1zM14 0v3M14 8v8M13 5.500h2" />
        </svg>
      </button>
      <div className="ml-0.5 grid h-full w-[558px] grid-cols-12">
        {apps.map((a) => (
          <button
            key={a.name}
            type="button"
            aria-label={a.name}
            className={clsx(
              "flex items-center justify-center",
              a.open && "mx-1 border-y-2 border-t-transparent border-b-[#76b5ec]"
            )}
          >
            <svg width="23" height="23" viewBox="0 0 24 24">
              {a.art}
            </svg>
          </button>
        ))}
        <button
          type="button"
          aria-label="Partition Wizard"
          className="flex items-center justify-center border-y-2 border-t-[#4d4d4d] border-b-[#76b5ec] bg-[#4d4d4d]"
        >
          <AppLogo size={22} />
        </button>
      </div>
      <div className="ml-auto flex items-center gap-[6px]">
        {/* Infobereich */}
        <svg width="16" height="16" viewBox="0 0 16 16" fill="none" stroke="#fff">
          <path d="M4 1v12l3-3 2 5 2-1-2-4.500h4z" />
        </svg>
        <svg width="16" height="16" viewBox="0 0 16 16" fill="none" stroke="#e0e0e0" className="ml-[5px]">
          <path d="M4.500 1.500h5v4h-5zM3.500 5.500h7v9h-7zM12 14c2 0 2-2 2-3" />
        </svg>
        <svg width="16" height="16" viewBox="0 0 16 16">
          <path d="M0 0h16v16H0z" fill="#1a74d8" />
          <circle cx="8" cy="8" r="6" fill="#fff" />
          <path d="M3 8l3-2.500v2h4v-2L13 8l-3 2.500v-2H6v2z" fill="#1a74d8" />
          <path d="M7 11h9v5H7z" fill="#8fd12a" />
        </svg>
        <svg width="16" height="16" viewBox="0 0 16 16">
          <path d="M3 0h13v12H3z" fill="#4fb04f" />
          <path d="M1 3h12v12H1z" fill="#dff0df" />
          <path d="M3 5l3 8 3-8" fill="none" stroke="#2c9a2c" strokeWidth="2" />
          <circle cx="12" cy="11.500" r="4" fill="#4b8fd0" />
          <path d="M12 9.500v2h2" stroke="#fff" fill="none" />
        </svg>
        <svg width="16" height="16" viewBox="0 0 16 16" fill="none" stroke="#2aa7e0">
          <path d="M0 0h16v16H0z" fill="#05080a" stroke="none" />
          <path d="M3 8l4-5 4 6-3 5M5 9l3-4 5 6M6 12l2-3 3 3" />
          <path d="M9 2l4 6-3 5" />
        </svg>
        <svg width="16" height="16" viewBox="0 0 16 16" fill="none" stroke="#76b900" strokeWidth="1.500">
          <path d="M0 0h16v16H0z" fill="#3a3a3a" stroke="none" />
          <path d="M2 15V7l3-3 9 1v4M4 11c2-3 6-2 8 1M3 15h4l1-4" />
        </svg>
        <svg width="16" height="16" viewBox="0 0 16 16">
          <path d="M8 0c2 2 4 2 7 2 0 7-2 11-7 14C3 13 1 9 1 2c3 0 5 0 7-2z" fill="#fff" />
          <path d="M8 1v13M1 7h13" stroke="#272727" />
          <circle cx="12" cy="11" r="4.500" fill="#15a04a" />
          <path d="M10 11l1.500 1.500L14 10" fill="none" stroke="#fff" />
        </svg>
        <svg width="17" height="16" viewBox="0 0 17 16" fill="none" stroke="#e8e8e8">
          <path d="M6 3.500h10v8H5.500V7M8 14.500h6M11 12v2M1.500 1.500h4v4h-4zM3.500 6v8h3" />
        </svg>
        <svg width="16" height="16" viewBox="0 0 16 16" fill="none" stroke="#e8e8e8">
          <path d="M1 6h2.500L7 3v10l-3.500-3H1zM9 6c1 1 1 3 0 4M11 4.500c2 2 2 5 0 7M13 3c3 3 3 7 0 10" />
        </svg>
      </div>
      <div className="ml-1 w-[66px] text-center text-[11px] leading-[17px]">
        <div>17:24</div>
        <div>05.12.2020</div>
      </div>
      <button type="button" aria-label="Info-Center" className="flex w-9 justify-center">
        <svg width="17" height="17" viewBox="0 0 17 17" fill="none" stroke="#e8e8e8">
          <path d="M1 1.500h15v11h-5l-2.500 3-2.500-3H1z" />
        </svg>
      </button>
      <div className="mr-[3px] ml-[9px] h-full w-px bg-[#5e5e5e]" />
    </footer>
  );
}

export default function App() {
  return (
    <div className="relative flex min-h-screen flex-col bg-[#e8e8e8] font-['DejaVu_Sans_Condensed','Open_Sans',sans-serif] text-xs text-[#6a6a6a]">
      <header className="flex h-[35px] items-center gap-[3px] border-b-2 border-[#1d1d1d] bg-[#303030] px-[3px] text-white">
        <AppLogo size={22} />
        <h1 className="flex-1">MiniTool Partition Wizard Kostenlos 11.5</h1>
        <div className="flex items-center gap-[15px] pr-[6px]">
          <button type="button" aria-label="Minimieren">
            <svg width="12" height="12" viewBox="0 0 12 12" fill="#fff">
              <path d="M0 8h12v2H0z" />
            </svg>
          </button>
          <button type="button" aria-label="Wiederherstellen">
            <svg width="13" height="12" viewBox="0 0 13 12" fill="none" stroke="#fff" strokeWidth="2">
              <path d="M2 4h6v6H2zM4 2h7v6H9" />
            </svg>
          </button>
          <button type="button" aria-label="Beenden">
            <CloseIcon />
          </button>
        </div>
      </header>

      <nav className="flex h-[30px] items-center gap-5 border-b border-[#c3c3c6] bg-[#d8d8d8] pr-[6px] pl-[9px]">
        {menu.map((m) => (
          <a key={m} href="#">
            {m}
          </a>
        ))}
        <div className="ml-auto flex h-[23px] font-['DejaVu_Sans',sans-serif] text-[18px] leading-[23px] font-bold text-white italic">
          <span className="w-[54px] bg-[#de3b3b] text-center">Mini</span>
          <span className="w-[52px] bg-[#383838] text-center">Tool</span>
        </div>
      </nav>

      <div className="flex h-[78px] items-stretch border-b border-[#c3c3c6]">
        <div className="flex items-start gap-[10px] border-r border-[#c3c3c6] pr-[11px] pl-[6px]">
          <Tool icon="apply" label="Übernehmen" disabled />
          <Tool icon="undo" label="Rückgängig machen" disabled />
          <Tool icon="discard" label="Verwerfen" disabled />
        </div>
        <div className="flex flex-1 items-start gap-[13px] pl-[13px]">
          <Tool icon="data" label="Daten wiederherstellen" />
          <Tool icon="partition" label="Partition wiederherstellen" />
          <Tool icon="benchmark" label="Benchmark für Datenträger" />
          <Tool icon="analyse" label="Speicher-Analysator" />
          <Tool icon="backup" label="Datensicherung" />
        </div>
        <div className="flex items-start border-l border-[#c3c3c6] px-[11px]">
          <Tool icon="boot" label="Bootfähige Medien" />
        </div>
        <div className="flex items-start gap-3 border-l border-[#c3c3c6] pr-[7px] pl-[10px]">
          <Tool icon="manual" label="Handbuch" />
          <Tool icon="register" label="Registrieren" />
        </div>
      </div>

      <div className="flex flex-1">
        <Sidebar />
        <main className="flex min-w-0 flex-1 flex-col">
          <div className="flex flex-1">
            <div className="min-w-0 flex-1">
              <PartitionTable />
            </div>
            <div className="flex w-[14px] flex-col items-center text-[#777]">
              <svg width="7" height="14" viewBox="0 0 7 14">
                <path d="M1 8l2.500-3L6 8z" fill="#666" />
              </svg>
              <div className="w-[12px] flex-1 bg-[#cbcbcb]" />
              <svg width="7" height="44" viewBox="0 0 7 44">
                <path d="M1 35l2.500 3L6 35z" fill="#666" />
              </svg>
            </div>
          </div>
          <div className="flex flex-col gap-2 border-t border-[#c3c3c6] pt-[3px] pr-1 pb-2 pl-0.5">
            {disks.map((d) => (
              <DiskCard key={d.title} disk={d} />
            ))}
          </div>
        </main>
      </div>

      <div className="flex h-[40px] items-start gap-4 border-t border-[#c3c3c6] pt-0.5 pl-[15px] text-[#505050]">
        {legend.map(([label, color]) => (
          <span key={label} className="flex items-center gap-[3px] pt-px">
            <i className={clsx("h-[9px] w-[9px] border border-[#5f5f5f]", color)} />
            {label}
          </span>
        ))}
        <div className="ml-auto flex items-center gap-1 pr-[6px] text-[#5b97c8]">
          <a href="#" aria-label="Facebook">
            <FaFacebook size={17} />
          </a>
          <a href="#" aria-label="Twitter">
            <FaTwitter size={17} />
          </a>
          <a
            href="#"
            aria-label="Google+"
            className="h-[17px] w-[17px] rounded-full bg-[#5b97c8] text-center font-['Liberation_Serif',serif] text-sm leading-[14px] text-white"
          >
            g⁺
          </a>
        </div>
      </div>

      <Taskbar />
      <MigrateDialog />
      <WarningDialog />
    </div>
  );
}
